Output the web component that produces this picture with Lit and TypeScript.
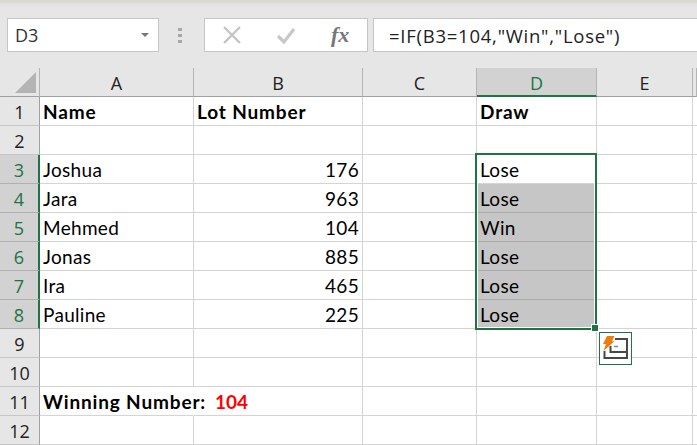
import { LitElement, html, css } from "lit";
import { customElement } from "lit/decorators.js";

const COLS = ["A", "B", "C", "D", "E", ""];
type Cell = { t: string; cls?: string };
const DATA: Record<number, Record<string, Cell>> = {
  1: { A: { t: "Name", cls: "b" }, B: { t: "Lot Number", cls: "b" }, D: { t: "Draw", cls: "b" } },
  3: { A: { t: "Joshua" }, B: { t: "176", cls: "r" }, D: { t: "Lose" } },
  4: { A: { t: "Jara" }, B: { t: "963", cls: "r" }, D: { t: "Lose", cls: "sel" } },
  5: { A: { t: "Mehmed" }, B: { t: "104", cls: "r" }, D: { t: "Win", cls: "sel" } },
  6: { A: { t: "Jonas" }, B: { t: "885", cls: "r" }, D: { t: "Lose", cls: "sel" } },
  7: { A: { t: "Ira" }, B: { t: "465", cls: "r" }, D: { t: "Lose", cls: "sel" } },
  8: { A: { t: "Pauline" }, B: { t: "225", cls: "r" }, D: { t: "Lose", cls: "sel" } },
};

@customElement("app-root")
export class AppRoot extends LitElement {
  static styles = css`
    :host { display: block; position: relative; width: 697px; height: 445px; overflow: hidden; background: #e6e6e6;
      font-family: "Lato", "Liberation Sans", sans-serif; font-size: 19px; color: #000; }
    .topline { height: 8px; background: linear-gradient(#dbd8d4 0, #dbd8d4 2px, #e2e1e0 4px, #e6e6e6 8px); }
    .bar { height: 34px; margin-top: 10px; display: flex; align-items: stretch; padding-left: 7px; }
    .box { background: #fff; border: 1px solid #c6c6c6; box-sizing: border-box; display: flex; align-items: center; }
    .name { width: 152px; padding: 0 9px 0 7px; justify-content: space-between; color: #333; font-family: "Open Sans", sans-serif; font-size: 18px; }
    .caret { width: 0; height: 0; border: 4px solid transparent; border-top: 4px solid #777; border-bottom: 0; }
    .dots { width: 45px; padding-right: 3px; box-sizing: border-box; display: flex; flex-direction: column; align-items: center; justify-content: center; gap: 3px; }
    .dots i { width: 4px; height: 3px; background: #a8a8a8; display: block; }
    .btns { width: 164px; }
    .btns svg { display: block; flex: none; }
    .x { margin-left: 18px; }
    .ok { margin-left: 35px; }
    .fx { font-family: "Liberation Serif", serif; font-style: italic; font-weight: bold; font-size: 22px; color: #777; margin-left: 35px; }
    .formula { flex: 1; margin-left: 5px; padding-left: 15px; border-right: 0; font-family: "Open Sans", sans-serif; font-size: 18.5px; letter-spacing: 0.75px; color: #222; }
    .sheet { position: absolute; top: 68px; left: 0; display: grid;
      grid-template-columns: 40px 154px 169px 114px 120px 96px 4px; grid-auto-rows: 29px; }
    .hd { box-sizing: border-box; background: #e6e6e6; display: flex; align-items: center; justify-content: center; color: #222;
      font-family: "Open Sans", sans-serif; font-size: 18px; padding-top: 1px; }
    .ch { border-right: 1px solid #b4b4b4; border-bottom: 1px solid #a0a0a0; padding-top: 2px; }
    .rh { border-right: 1px solid #a0a0a0; border-bottom: 1px solid #c6c6c6; }
    .rh.on { background: #d2d2d2; color: #217346; border-right: 2px solid #217346; border-bottom-color: #b0b0b0; }
    .ch.on { background: #d2d2d2; color: #217346; border-bottom: 2px solid #217346; }
    .corner { border-right: 1px solid #b4b4b4; border-bottom: 1px solid #a0a0a0; padding: 0; justify-content: flex-start; align-items: flex-start; }
    .c { box-sizing: border-box; background: #fff; border-right: 1px solid #d4d4d4; border-bottom: 1px solid #d4d4d4;
      padding: 1px 3px 0 3px; display: flex; align-items: center; white-space: nowrap; color: #000; letter-spacing: 0.3px; }
    .c.b { font-weight: 700; letter-spacing: 0.85px; }
    .c.r { justify-content: flex-end; }
    .c.sel { background: #c6c6c6; border-bottom-color: #ababab; border-right-color: #c6c6c6; }
    .c.spill { overflow: visible; border-right-color: #fff; z-index: 1; }
    .red { color: #f00; margin-left: 9px; letter-spacing: 0; }
    .selbox { position: absolute; left: 475px; top: 153px; width: 122px; height: 177px; box-sizing: border-box; border: 2px solid #217346; box-shadow: inset 0 0 0 1px #fff; pointer-events: none; }
    .handle { position: absolute; left: 592px; top: 325px; width: 6px; height: 6px; background: #217346; outline: 1px solid #fff; }
    .qa { position: absolute; left: 599px; top: 332px; width: 33px; height: 33px; box-sizing: border-box; border: 1px solid #217346; background: #fff; display: flex; align-items: center; justify-content: center; }
  `;

  private row(n: number) {
    const on = n >= 3 && n <= 8;
    return html`<div class="hd rh ${on ? "on" : ""}">${n}</div>
      ${COLS.map((c) => {
        const cell = DATA[n]?.[c];
        if (n === 11 && c === "A") {
          return html`<div class="c b spill">Winning Number:<span class="red">104</span></div>`;
        }
        return html`<div class="c ${cell?.cls ?? ""}">${cell?.t ?? ""}</div>`;
      })}`;
  }

  render() {
    return html`
      <div class="topline"></div>
      <div class="bar">
        <div class="box name"><span>D3</span><span class="caret"></span></div>
        <div class="dots"><i></i><i></i><i></i></div>
        <div class="box btns">
          <svg class="x" width="18" height="18" viewBox="0 0 18 18"><path d="M1 1 L17 17 M17 1 L1 17" stroke="#c4c4c4" stroke-width="2.4" fill="none"/></svg>
          <svg class="ok" width="20" height="18" viewBox="0 0 20 18"><path d="M2 10 L8 16 L18 3" stroke="#c8c8c8" stroke-width="3.2" fill="none"/></svg>
          <span class="fx">fx</span>
        </div>
        <div class="box formula">=IF(B3=104,"Win","Lose")</div>
      </div>
      <div class="sheet">
        <div class="hd corner">
          <svg width="38" height="27" viewBox="0 0 38 27"><path d="M36 4 V25 H15 Z" fill="#b4b4b4"/></svg>
        </div>
        ${COLS.map((c) => html`<div class="hd ch ${c === "D" ? "on" : ""}">${c}</div>`)}
        ${Array.from({ length: 12 }, (_, i) => this.row(i + 1))}
      </div>
      <div class="selbox"></div>
      <div class="handle"></div>
      <div class="qa">
        <svg width="26" height="26" viewBox="0 0 26 26">
          <path d="M12 3 H24 V22 H1.5 V15" fill="none" stroke="#484848" stroke-width="2"/>
          <path d="M7.5 10 V16 H24" fill="none" stroke="#484848" stroke-width="2"/>
          <path d="M11 10.5 H15" stroke="#888" stroke-width="1.5"/>
          <path d="M4 0 H11.5 L9 5.2 H11.5 L.5 15 L3 8 H0 Z" fill="#ed7d0c"/>
        </svg>
      </div>
    `;
  }
}
